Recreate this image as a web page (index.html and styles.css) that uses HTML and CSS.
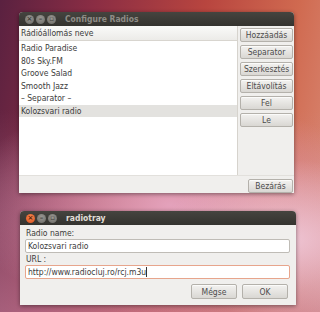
FILE: index.html
```html
<!DOCTYPE html>
<html lang="hu">
<head>
	<meta charset="UTF-8">
	<title>Configure Radios</title>
	<link rel="stylesheet" href="styles.css">
</head>
<body class="body">
	<div class="desktop">
		<section class="window window--config">
			<header class="titlebar titlebar--inactive">
				<span class="controls">
					<span class="ctl ctl--close">×</span>
					<span class="ctl">–</span>
					<span class="ctl">▫</span>
				</span>
				<span class="titlebar__text">Configure Radios</span>
			</header>
			<div class="window__main">
				<div class="list">
					<div class="list__head">Rádióállomás neve</div>
					<div class="list__row">Radio Paradise</div>
					<div class="list__row">80s Sky.FM</div>
					<div class="list__row">Groove Salad</div>
					<div class="list__row">Smooth Jazz</div>
					<div class="list__row">– Separator –</div>
					<div class="list__row list__row--selected">Kolozsvari radio</div>
				</div>
				<div class="side">
					<button class="btn side__btn">Hozzáadás</button>
					<button class="btn side__btn">Separator</button>
					<button class="btn side__btn">Szerkesztés</button>
					<button class="btn side__btn">Eltávolítás</button>
					<button class="btn side__btn">Fel</button>
					<button class="btn side__btn">Le</button>
				</div>
			</div>
			<footer class="window__foot">
				<button class="btn foot__btn">Bezárás</button>
			</footer>
		</section>

		<section class="window window--edit">
			<header class="titlebar">
				<span class="controls">
					<span class="ctl ctl--close ctl--active">×</span>
					<span class="ctl">–</span>
					<span class="ctl">▫</span>
				</span>
				<span class="titlebar__text">radiotray</span>
			</header>
			<div class="form">
				<label class="form__label">Radio name:</label>
				<div class="input">Kolozsvari radio</div>
				<label class="form__label">URL :</label>
				<div class="input input--focus">http://www.radiocluj.ro/rcj.m3u<span class="caret"></span></div>
				<div class="form__actions">
					<button class="btn form__btn">Mégse</button>
					<button class="btn form__btn">OK</button>
				</div>
			</div>
		</section>
	</div>
</body>
</html>
```

FILE: styles.css
```css
:root {
	--panel: #f0efed;
	--text: #3c3c3c;
}

* {
	box-sizing: border-box;
}

.body {
	margin: 0;
	width: 320px;
	height: 312px;
	overflow: hidden;
	font-family: "DejaVu Sans Condensed", "DejaVu Sans", sans-serif;
	font-size: 8.5px;
	color: var(--text);
}

.desktop {
	position: relative;
	width: 320px;
	height: 312px;
	background:
		radial-gradient(ellipse 130px 80px at 290px 240px, rgba(242, 205, 222, 0.85), transparent),
		radial-gradient(ellipse 210px 110px at 170px 205px, rgba(232, 170, 198, 0.9), transparent),
		linear-gradient(180deg, rgba(0, 0, 0, 0) 35%, rgba(205, 140, 170, 0.55) 100%),
		linear-gradient(100deg, #5a2140 0%, #8a2d44 25%, #b8453f 55%, #d06a50 80%, #da8c78 100%);
}

.window {
	position: absolute;
	display: flex;
	flex-direction: column;
	background: var(--panel);
	border-radius: 4px 4px 0 0;
	box-shadow: 0 1px 4px rgba(0, 0, 0, 0.45);
	overflow: hidden;
}

.window--config {
	left: 19px;
	top: 12px;
	width: 275px;
	height: 181px;
}

.window--edit {
	left: 20px;
	top: 211px;
	width: 276px;
	height: 94px;
}

.titlebar {
	flex: none;
	height: 14px;
	display: flex;
	align-items: center;
	gap: 9px;
	padding-left: 6px;
	background: linear-gradient(#45443f, #34332f);
	color: #e2dfd8;
	font-weight: bold;
	font-size: 8.5px;
}

.titlebar--inactive {
	color: #8e8c86;
}

.controls {
	display: flex;
	gap: 2px;
}

.ctl {
	width: 9px;
	height: 9px;
	border-radius: 50%;
	background: radial-gradient(circle at 50% 35%, #9a9893, #6a6964);
	color: #3d3c38;
	font-family: "DejaVu Sans", sans-serif;
	font-size: 7px;
	line-height: 9px;
	text-align: center;
	font-weight: bold;
}

.ctl--active {
	background: radial-gradient(circle at 50% 35%, #f6884f, #d9501f);
	color: #5a1f0a;
}

.window__main {
	display: flex;
	height: 149px;
}

.list {
	width: 219px;
	background: #fff;
	border-right: 1px solid #d6d3cd;
}

.list__head {
	height: 15px;
	padding: 2px 0 0 2px;
	background: linear-gradient(#fafaf9, #ecebe8);
	border-bottom: 1px solid #d8d5cf;
	margin-bottom: 1px;
}

.list__row {
	height: 12.5px;
	padding-left: 2px;
	line-height: 12.5px;
}

.list__row--selected {
	background: #e3e2df;
}

.side {
	flex: 1;
	display: flex;
	flex-direction: column;
	gap: 3px;
	padding: 2px 1px 0 2px;
}

.btn {
	display: block;
	height: 14px;
	padding: 0;
	font-family: inherit;
	font-size: 8.5px;
	color: #4c4c4c;
	background: linear-gradient(#f3f2f0, #d9d7d3);
	border: 1px solid #b4b1ab;
	border-radius: 2px;
	box-shadow: inset 0 1px 0 rgba(255, 255, 255, 0.7);
}

.side__btn {
	width: 100%;
}

.window__foot {
	flex: 1;
	display: flex;
	justify-content: flex-end;
	align-items: flex-start;
	padding: 3px 1px 0 0;
	border-top: 1px solid #e2e0dc;
}

.foot__btn {
	width: 45px;
}

.form {
	display: flex;
	flex-direction: column;
	padding: 2px 6px 0 5px;
}

.form__label {
	height: 12px;
	line-height: 12px;
	padding-left: 1px;
}

.input {
	height: 14px;
	line-height: 12px;
	padding-left: 2px;
	background: #fff;
	border: 1px solid #bfbcb6;
	border-radius: 2px;
}

.input--focus {
	border-color: #e7a58c;
}

.caret {
	display: inline-block;
	width: 1px;
	height: 10px;
	vertical-align: -2px;
	background: #333;
}

.form__actions {
	display: flex;
	justify-content: flex-end;
	gap: 5px;
	margin-top: 5px;
	padding-right: 2px;
}

.form__btn {
	width: 46px;
	height: 15px;
}
```
